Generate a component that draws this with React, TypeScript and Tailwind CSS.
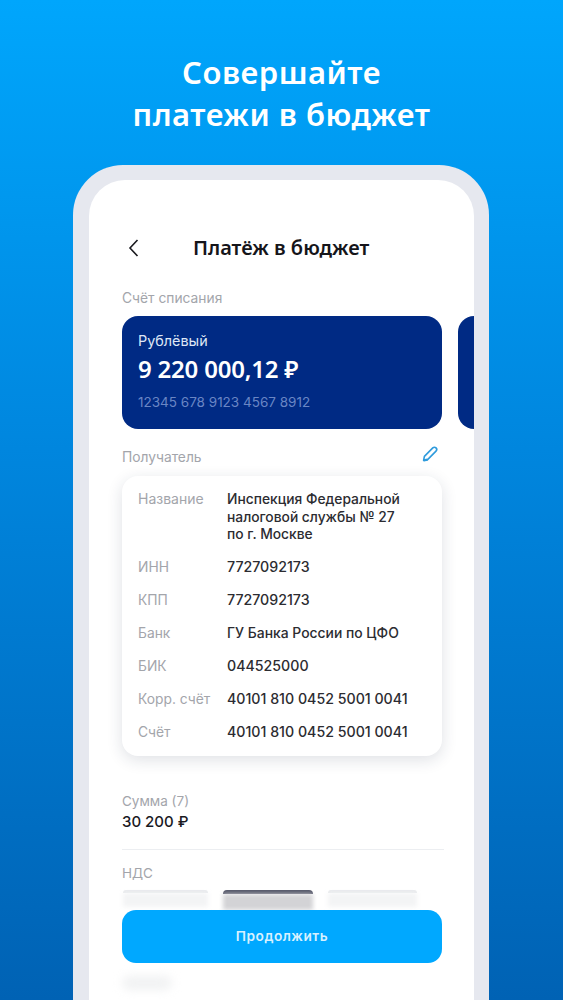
import React from "react";

const rows = [
  { label: "ИНН", value: "7727092173", size: "text-[14.2px]" },
  { label: "КПП", value: "7727092173", size: "text-[14.2px]" },
  { label: "Банк", value: "ГУ Банка России по ЦФО", size: "text-[13.9px]" },
  { label: "БИК", value: "044525000", size: "text-[14.2px]" },
  { label: "Корр. счёт", value: "40101 810 0452 5001 0041", size: "text-[14.2px]" },
  { label: "Счёт", value: "40101 810 0452 5001 0041", size: "text-[14.2px]" },
];

function PencilIcon() {
  return (
    <svg width="18" height="18" viewBox="0 0 18 18" fill="none" stroke="#2f9bdc" strokeWidth="1.6" strokeLinejoin="round">
      <path d="M2.6 15.4 L3.4 11.4 L11.8 2.9 C12.7 2 14.1 2 15 2.9 C15.9 3.8 15.9 5.2 15 6.1 L6.6 14.6 Z" />
      <path d="M2.6 15.4 L6.6 14.6" strokeWidth="2.4" />
    </svg>
  );
}

function App() {
  return (
    <div className="flex h-[1000px] w-[563px] flex-col overflow-hidden bg-gradient-to-b from-[#00a6fc] via-[#0086de] via-[45%] to-[#0062b4] font-['Inter',sans-serif]">
      <h1 className="mt-[51px] text-center font-['Noto_Sans',sans-serif] text-[31px] leading-[42px] font-semibold tracking-[0.5px] text-white">
        Совершайте
        <br />
        платежи в бюджет
      </h1>

      <div className="mt-[30px] ml-[73px] w-[416px] flex-1 rounded-t-[50px] bg-[#e6e8ef] pt-[15px] pr-[15px] pl-[16px]">
        <div className="relative h-full overflow-hidden rounded-t-[36px] bg-white pl-[33px]">
          <div className="mt-[56px] flex h-[24px] items-center">
            <svg width="12" height="18" viewBox="0 0 12 18" fill="none" stroke="#1a1a1f" strokeWidth="1.6" className="ml-[6px]">
              <path d="M9.5 1 L2 9 L9.5 17" />
            </svg>
            <span className="ml-[53px] font-['Noto_Sans',sans-serif] text-[20px] font-semibold text-[#15151a]">Платёж в бюджет</span>
          </div>

          <div className="mt-[30px] text-[13.8px] leading-[16px] text-[#a3a5ab]">Счёт списания</div>

          <div className="mt-[10px] flex gap-[16px]">
            <div className="h-[113px] w-[320px] shrink-0 rounded-[16px] bg-[#002a84] px-[16px] pt-[16px]">
              <div className="text-[14.4px] leading-[18px] text-[#dfe6f5]">Рублёвый</div>
              <div className="mt-[4px] font-['Noto_Sans',sans-serif] text-[24px] leading-[30px] font-semibold tracking-[-0.2px] text-white">9 220 000,12 ₽</div>
              <div className="mt-[9px] text-[13.5px] leading-[18px] text-[#6a86c4]">12345 678 9123 4567 8912</div>
            </div>
            <div className="h-[113px] w-[40px] shrink-0 rounded-l-[16px] bg-[#002a84]" />
          </div>

          <div className="mt-[18px] flex w-[320px] items-center justify-between">
            <span className="text-[13.8px] leading-[20px] text-[#a3a5ab]">Получатель</span>
            <span className="-mt-[6px] mr-[3px]"><PencilIcon /></span>
          </div>

          <div className="mt-[9px] w-[320px] rounded-[16px] bg-white px-[16px] pt-[14px] pb-[15px] shadow-[0_4px_16px_rgba(30,40,70,0.14)]">
            <div className="flex">
              <span className="w-[89px] shrink-0 text-[14px] leading-[18px] text-[#a3a5ab]">Название</span>
              <span className="pt-[1px] text-[13.8px] leading-[17.5px] font-[450] text-[#2c2c31]">
                Инспекция Федеральной
                <br />
                налоговой службы № 27
                <br />
                по г. Москве
              </span>
            </div>
            <div className="mt-[14px] flex flex-col gap-[15px]">
              {rows.map((row) => (
                <div key={row.label} className="flex h-[18px] items-center">
                  <span className="w-[89px] shrink-0 text-[13.8px] leading-[18px] whitespace-nowrap text-[#a3a5ab]">{row.label}</span>
                  <span className={`${row.size} leading-[18px] font-[450] whitespace-nowrap text-[#2c2c31]`}>{row.value}</span>
                </div>
              ))}
            </div>
          </div>

          <div className="mt-[36px] text-[13.5px] leading-[18px] text-[#a3a5ab]">Сумма (7)</div>
          <div className="mt-[1px] text-[15px] leading-[22px] font-[450] text-[#1a1a1f]">30 200 ₽</div>
          <div className="mt-[16px] h-px w-[322px] bg-[#eceef1]" />
          <div className="mt-[14px] text-[13.5px] leading-[18px] text-[#a3a5ab]">НДС</div>

          <div className="mt-[8px] flex h-[20px] w-[320px]">
            <div className="ml-[1px] w-[85px]">
              <div className="h-[3px] rounded-t-[3px] bg-[#e8eaed]" />
              <div className="h-[14px] bg-[#f3f4f5] blur-[2px]" />
            </div>
            <div className="ml-[15px] w-[90px]">
              <div className="h-[4px] rounded-t-[5px] bg-[#55586a]" />
              <div className="h-[16px] bg-[#d3d3d6] blur-[2px]" />
            </div>
            <div className="ml-[15px] w-[89px]">
              <div className="h-[3px] rounded-t-[3px] bg-[#e8eaed]" />
              <div className="h-[14px] bg-[#f3f4f5] blur-[2px]" />
            </div>
          </div>

          <div className="absolute top-[730px] left-[33px] flex h-[53px] w-[320px] items-center justify-center rounded-[14px] bg-[#00a8ff] text-[13.7px] font-semibold tracking-[0.5px] text-[#d8f1ff]">
            Продолжить
          </div>
          <div className="absolute top-[796px] left-[33px] h-[14px] w-[50px] rounded-full bg-[#f1f2f3] blur-[5px]" />
        </div>
      </div>
    </div>
  );
}

export default App;
